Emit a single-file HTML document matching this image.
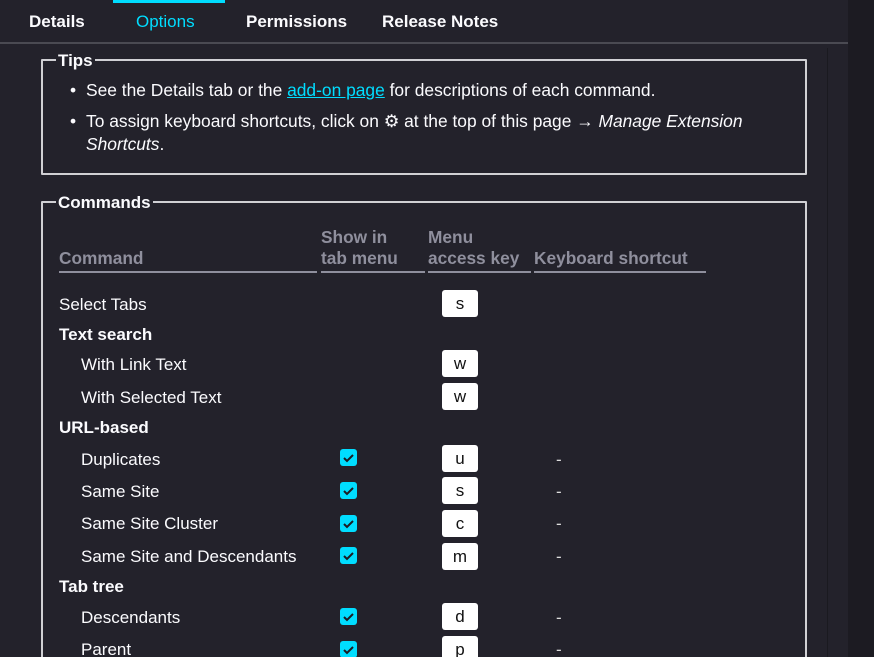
<!DOCTYPE html>
<html style="overflow:hidden;height:657px"><head><meta charset="utf-8"><style>
*{margin:0;padding:0;box-sizing:border-box}
body{width:874px;height:657px;overflow:hidden;background:#23222b;font-family:"Liberation Sans",sans-serif;color:#fbfbfe;font-size:17px;position:relative}
.a{position:absolute;white-space:nowrap;line-height:20px}
.b{font-weight:bold}
.tab{position:absolute;top:12px;font-size:17px;font-weight:bold;line-height:20px}
.fs{position:absolute;left:41px;width:766px;border:2px solid #d0d0d4;border-radius:1px}
.leg{position:absolute;background:#23222b;padding:0 2px;font-weight:bold;font-size:17px;line-height:20px}
.h{position:absolute;color:#8f8f9d;font-weight:bold;font-size:17.3px;line-height:21px;border-bottom:2px solid #8f8f9d;padding-bottom:2px;white-space:nowrap}
.k{position:absolute;left:442px;width:36px;height:27px;background:#fff;border-radius:3px;color:#111;text-align:center;line-height:27px;font-size:17px}
.c{position:absolute;left:340px;width:17px;height:17px;background:#00ddff;border-radius:3px}
.c svg{display:block}
.d{position:absolute;left:556px;color:#ddd}
.t{font-size:17.4px}
</style></head><body>
<div style="position:absolute;left:848px;top:0;width:26px;height:657px;background:#1c1b22"></div>
<div style="position:absolute;left:0;top:42px;width:848px;height:2px;background:#4a4a52"></div>
<div style="position:absolute;left:827px;top:48px;width:1px;height:609px;background:#1a1a20"></div>
<div style="position:absolute;left:113px;top:0;width:112px;height:3px;background:#00ddff"></div>
<div class="tab" style="left:29px">Details</div>
<div class="tab" style="left:136px;color:#00ddff;font-weight:normal">Options</div>
<div class="tab" style="left:246px">Permissions</div>
<div class="tab" style="left:382px">Release Notes</div>

<div class="fs" style="top:59px;height:116px"></div>
<div class="leg" style="left:56px;top:51px">Tips</div>
<div class="a t" style="left:70px;top:80px">•</div>
<div class="a t" style="left:86px;top:80px">See the Details tab or the <span style="color:#00ddff;text-decoration:underline">add-on page</span> for descriptions of each command.</div>
<div class="a t" style="left:70px;top:111px">•</div>
<div class="a t" style="left:86px;top:111px">To assign keyboard shortcuts, click on ⚙ at the top of this page → <i>Manage Extension</i></div>
<div class="a t" style="left:86px;top:134px"><i>Shortcuts</i>.</div>

<div class="fs" style="top:201px;height:470px"></div>
<div class="leg" style="left:56px;top:193px">Commands</div>

<div class="h" style="left:59px;top:248px;width:258px">Command</div>
<div class="h" style="left:321px;top:227px;width:104px">Show in<br>tab menu</div>
<div class="h" style="left:428px;top:227px;width:103px">Menu<br>access key</div>
<div class="h" style="left:534px;top:248px;width:172px">Keyboard shortcut</div>

<div class="a" style="left:59px;top:295px">Select Tabs</div><div class="k" style="top:290px">s</div>
<div class="a b" style="left:59px;top:325px">Text search</div>
<div class="a" style="left:81px;top:355px">With Link Text</div><div class="k" style="top:350px">w</div>
<div class="a" style="left:81px;top:388px">With Selected Text</div><div class="k" style="top:383px">w</div>
<div class="a b" style="left:59px;top:418px">URL-based</div>
<div class="a" style="left:81px;top:450px">Duplicates</div><div class="c" style="top:449px"><svg width="17" height="17"><path d="M4 9l3 3 6-6" stroke="#1c1b22" stroke-width="2" fill="none"/></svg></div><div class="k" style="top:445px">u</div><div class="d a" style="top:450px">-</div>
<div class="a" style="left:81px;top:482px">Same Site</div><div class="c" style="top:482px"><svg width="17" height="17"><path d="M4 9l3 3 6-6" stroke="#1c1b22" stroke-width="2" fill="none"/></svg></div><div class="k" style="top:477px">s</div><div class="d a" style="top:482px">-</div>
<div class="a" style="left:81px;top:514px">Same Site Cluster</div><div class="c" style="top:515px"><svg width="17" height="17"><path d="M4 9l3 3 6-6" stroke="#1c1b22" stroke-width="2" fill="none"/></svg></div><div class="k" style="top:510px">c</div><div class="d a" style="top:514px">-</div>
<div class="a" style="left:81px;top:547px">Same Site and Descendants</div><div class="c" style="top:547px"><svg width="17" height="17"><path d="M4 9l3 3 6-6" stroke="#1c1b22" stroke-width="2" fill="none"/></svg></div><div class="k" style="top:543px">m</div><div class="d a" style="top:547px">-</div>
<div class="a b" style="left:59px;top:577px">Tab tree</div>
<div class="a" style="left:81px;top:608px">Descendants</div><div class="c" style="top:608px"><svg width="17" height="17"><path d="M4 9l3 3 6-6" stroke="#1c1b22" stroke-width="2" fill="none"/></svg></div><div class="k" style="top:603px">d</div><div class="d a" style="top:608px">-</div>
<div class="a" style="left:81px;top:640px">Parent</div><div class="c" style="top:641px"><svg width="17" height="17"><path d="M4 9l3 3 6-6" stroke="#1c1b22" stroke-width="2" fill="none"/></svg></div><div class="k" style="top:636px">p</div><div class="d a" style="top:640px">-</div>
</body></html>
